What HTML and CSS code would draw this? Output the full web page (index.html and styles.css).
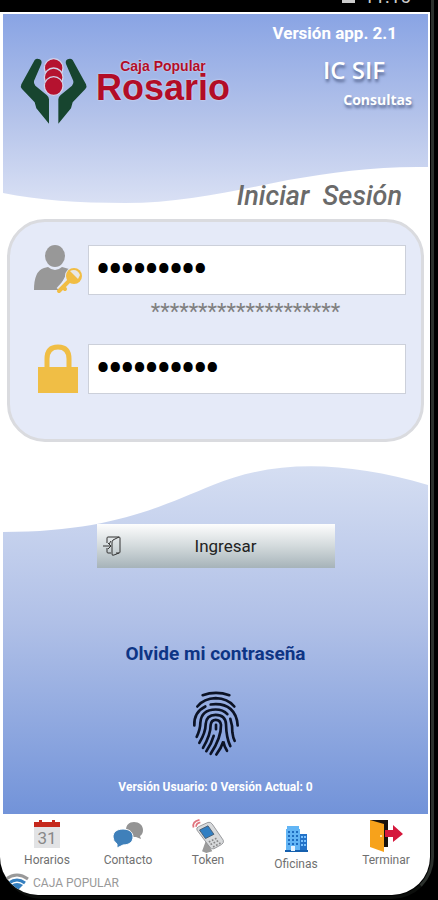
FILE: index.html
```html
<!DOCTYPE html>
<html lang="es">
<head>
    <meta charset="UTF-8">
    <meta name="viewport" content="width=device-width, initial-scale=1.0">
    <title>Caja Popular Rosario - Iniciar Sesión</title>
    <link rel="stylesheet" href="styles.css">
</head>
<body>
<div class="phone">

    <!-- Status bar -->
    <div class="status-bar">
        <span class="battery"></span>
        <span class="clock">11:16</span>
    </div>

    <div class="screen">

        <!-- Header -->
        <header class="hero">
            <svg class="wave" viewBox="0 0 425 189" preserveAspectRatio="none" aria-hidden="true">
                <defs>
                    <linearGradient id="sky" x1="0" y1="0" x2="0" y2="1">
                        <stop offset="0" stop-color="#89a4e4"/>
                        <stop offset="0.55" stop-color="#b4c3ea"/>
                        <stop offset="1" stop-color="#d9e0f4"/>
                    </linearGradient>
                </defs>
                <path fill="url(#sky)" d="M0 0H425V153C375 152 330 158 285 166C230 177 180 189 122 189C75 189 35 186 0 179Z"/>
            </svg>
            <p class="app-version">Versión app. 2.1</p>
            <div class="brand-row">
                <div class="brand">
                    <svg class="logo" viewBox="60 180 204 200" aria-hidden="true">
                        <g fill="#17452f">
                            <path d="M104 187Q110 181 119 185Q127 189 124 199L102 250Q100 258 106 264L140 292Q147 298 147 305V378L109 332L104 314L66 274Q60 267 64 260Z"/>
                            <path d="M218 187Q212 181 203 185Q195 189 198 199L220 250Q222 258 216 264L182 292Q175 298 175 305V378L213 332L218 314L256 274Q262 267 258 260Z"/>
                        </g>
                        <g fill="#b5122f" stroke="#d3d3ea" stroke-width="4">
                            <circle cx="161" cy="211" r="28"/>
                            <circle cx="161" cy="239" r="28"/>
                            <circle cx="161" cy="265" r="28"/>
                        </g>
                    </svg>
                    <div class="brand-name">
                        <span class="brand-small">Caja Popular</span>
                        <span class="brand-big">Rosario</span>
                    </div>
                </div>
                <div class="product">
                    <span class="product-name">IC SIF</span>
                    <span class="product-sub">Consultas</span>
                </div>
            </div>
            <h1>Iniciar&nbsp; Sesión</h1>
        </header>

        <!-- Login form -->
        <form id="login" class="card">
            <div class="field">
                <label for="user" aria-label="Usuario">
                    <svg width="50" height="50" viewBox="0 0 50 50" aria-hidden="true">
                        <ellipse cx="22" cy="11" rx="10" ry="11" fill="#989898"/>
                        <path fill="#989898" d="M1 45Q1 26 11 23L15 22Q22 28 29 22L36 24L25 45Z"/>
                        <path d="M27 46L36 36" stroke="#e5eaf8" stroke-width="9" fill="none"/>
                        <circle cx="41" cy="31" r="9" fill="#e5eaf8"/>
                        <path d="M26 46L36 36M30 42L32 44" stroke="#f1bd43" stroke-width="4" stroke-linecap="round" fill="none"/>
                        <circle cx="41" cy="31" r="8" fill="#f1bd43"/>
                        <path fill="#e8e7e4" d="M37 26Q44 23 47 30L45 34Z"/>
                    </svg>
                </label>
                <input type="password" id="user" value="123456789">
            </div>
            <p class="hint">********************</p>
            <div class="field">
                <label for="pass" aria-label="Contraseña">
                    <svg width="50" height="50" viewBox="0 0 50 50" aria-hidden="true">
                        <path d="M14 26V15Q14 3 25 3Q36 3 36 15V26" fill="none" stroke="#f0be45" stroke-width="5"/>
                        <rect x="5" y="23" width="40" height="26" fill="#f0be45"/>
                    </svg>
                </label>
                <input type="password" id="pass" value="1234567890">
            </div>
        </form>

        <!-- Access -->
        <main class="access">
            <svg class="wave" viewBox="0 0 425 348" preserveAspectRatio="none" aria-hidden="true">
                <defs>
                    <linearGradient id="sea" x1="0" y1="0" x2="0" y2="1">
                        <stop offset="0" stop-color="#d5def2"/>
                        <stop offset="0.45" stop-color="#b0c0e7"/>
                        <stop offset="1" stop-color="#7293d9"/>
                    </linearGradient>
                </defs>
                <path fill="url(#sea)" d="M0 66C110 66 160 39 210 19C270 -6 340 -6 425 19V348H0Z"/>
            </svg>
            <button class="enter" type="submit" form="login">
                <svg width="20" height="22" viewBox="0 0 20 22" fill="none" stroke="#333" stroke-width="1" aria-hidden="true">
                    <path d="M5 8V3Q5 2 6 2H17Q18 2 18 3V17Q18 18 17 18H14M5 13V17Q5 18 6 18H9"/>
                    <path d="M17 2L11 5Q10 6 10 8V19Q10 21 12 20L17 18"/>
                    <path d="M1 11H9M6 8L9 11L6 14M9 6L7 9"/>
                </svg>
                <span>Ingresar</span>
            </button>
            <a class="forgot" href="#">Olvide mi contraseña</a>
            <button class="finger" type="button" aria-label="Huella">
                <svg width="48" height="67" viewBox="315 182 144 200" fill="none" stroke="#0c1326" stroke-width="8" stroke-linecap="round" aria-hidden="true">
                    <path d="M347 197Q387 183 427 197"/>
                    <path d="M331 231Q351 207 386 206Q422 207 442 231"/>
                    <path d="M322 288Q320 248 355 231M371 225C425 218 450 248 452 288"/>
                    <path d="M329 322Q340 300 340 280C342 252 360 240 386 240Q408 240 421 254M430 268Q437 290 436 308Q438 325 443 334"/>
                    <path d="M337 340C352 315 356 298 356 284C357 265 368 256 386 256C406 256 416 266 417 284Q418 325 430 350"/>
                    <path d="M348 355C366 325 371 305 371 286Q373 271 386 271Q400 271 402 286Q403 325 371 373"/>
                    <path d="M387 286V299M380 319Q373 344 358 365"/>
                    <path d="M388 375Q403 355 409 336Q412 352 420 364"/>
                </svg>
            </button>
            <p class="versions">Versión Usuario: 0 Versión Actual: 0</p>
        </main>

        <!-- Bottom menu -->
        <nav class="menu">
            <a href="#">
                <svg width="28" height="30" viewBox="0 0 28 30" aria-hidden="true">
                    <rect x="1" y="7" width="26" height="22" fill="#e2e3e5"/>
                    <path fill="#c5281c" d="M1 3H6V1H9V3H19V1H22V3H27V8H1Z"/>
                    <text x="14" y="25" class="day">31</text>
                </svg>
                Horarios
            </a>
            <a href="#">
                <svg width="30" height="30" viewBox="0 0 30 30" aria-hidden="true">
                    <path fill="#949494" d="M21 3C26 3 30 6 30 11Q30 15 27 17L28 20L23 18C17 18 13 16 13 11C13 6 16 3 21 3Z"/>
                    <path fill="#3f80ba" stroke="#fff" d="M10 10C16 10 20 13 20 18C20 23 16 26 10 26L4 29L4 25Q0 22 0 18C0 13 4 10 10 10Z"/>
                </svg>
                Contacto
            </a>
            <a href="#">
                <svg class="token" width="38" height="40" viewBox="0 0 38 40" aria-hidden="true">
                    <path fill="none" stroke="#e0727c" stroke-width="2" d="M2 10Q0 3 9 1M5 9Q5 5 10 4"/>
                    <path fill="#9b9b9b" d="M17 24L25 24L22 34L24 38L17 40L12 38Z"/>
                    <path fill="#d7d9db" stroke="#8b8d90" d="M6 13Q5 10 8 9L19 4Q22 3 24 6L37 25Q38 28 35 30L26 35Q23 36 21 33Z"/>
                    <path fill="#317fc3" stroke="#44566a" d="M9 13L19 8L26 18L16 23Z"/>
                    <path stroke="#888" stroke-width="2" stroke-dasharray="2 2" d="M20 27L30 22M22 30L32 25M25 33L34 28"/>
                </svg>
                Token
            </a>
            <a href="#" class="low">
                <svg width="24" height="28" viewBox="0 0 24 28" aria-hidden="true">
                    <path fill="#62b5f5" d="M3 1H15V4H16V26H2V4H3Z"/>
                    <path fill="#2372c8" d="M16 9H23V26H16Z"/>
                    <path fill="#1660ae" d="M1 25H24V27H1Z"/>
                    <path stroke="#1e6dc0" stroke-width="2" stroke-dasharray="2 2" d="M4 7H15M4 11H15M4 15H15M4 19H15"/>
                    <path stroke="#7cc3ff" stroke-width="2" stroke-dasharray="2 1" d="M17 12H22M17 16H22M17 20H22"/>
                    <rect x="7" y="21" width="4" height="5" fill="#e5f4ff"/>
                </svg>
                Oficinas
            </a>
            <a href="#">
                <svg width="36" height="34" viewBox="0 0 36 34" aria-hidden="true">
                    <rect x="2" y="1" width="18" height="27" fill="#17120d"/>
                    <path fill="#f7a21b" d="M2 1L16 5V33L2 28Z"/>
                    <circle cx="13" cy="17" r="1" fill="#fff3c8"/>
                    <path fill="#d5183c" d="M17 11H25V6L35 15L25 23V18H17Z"/>
                </svg>
                Terminar
            </a>
        </nav>

        <footer class="network">
            <svg width="28" height="20" viewBox="0 0 28 20" fill="none" aria-hidden="true">
                <path stroke="#999" stroke-width="3" d="M3 6Q14 -2 25 6"/>
                <path stroke="#357fbf" stroke-width="3" d="M6 10Q14 4 22 10"/>
                <path fill="#357fbf" d="M8 12Q14 8 20 12L14 18Z"/>
            </svg>
            CAJA POPULAR
        </footer>
    </div>
</div>
</body>
</html>
```
FILE: styles.css
```css
* {
    box-sizing: border-box;
}

body {
    margin: 0;
    background-color: #000;
    font-family: Roboto, "Liberation Sans", sans-serif;
    color: #666;
}

p, h1 {
    margin: 0;
}

/* Phone frame */
.phone {
    margin-right: 4px;
    padding: 0 1px 1px 0;
    border-right: 3px solid #2c312d;
    border-bottom: 3px solid #0c0e0c;
    border-radius: 0 0 42px 42px;
}

.status-bar {
    display: flex;
    justify-content: flex-end;
    gap: 9px;
    height: 12px;
    padding-right: 19px;
    overflow: hidden;
    background-color: #000;
}

.battery {
    width: 13px;
    height: 3px;
    background-color: #ccc;
}

.clock {
    height: 20px;
    margin-top: -13px;
    font-size: 19px;
    line-height: 20px;
    color: #ccc;
}

.screen {
    overflow: hidden;
    padding-top: 2px;
    background-color: #fff;
    border-radius: 0 0 38px 38px;
}

/* Curved backgrounds */
.wave {
    position: absolute;
    top: 0;
    left: 0;
    width: 100%;
    z-index: -1;
}

/* Header */
.hero {
    position: relative;
    z-index: 0;
    margin: 0 2px 0 3px;
    padding-top: 8px;
}

.hero .wave {
    height: 189px;
}

.app-version {
    padding-right: 31px;
    font-size: 17px;
    font-weight: 700;
    line-height: 22px;
    text-align: right;
    color: #fff;
}

.brand-row {
    display: flex;
    justify-content: space-between;
    height: 138px;
    padding: 12px 16px 0 17px;
}

.brand {
    display: flex;
    gap: 8px;
}

.logo {
    width: 68px;
    height: 70px;
}

.brand-name {
    display: flex;
    flex-direction: column;
    align-items: center;
    padding-top: 4px;
    font-family: "Liberation Sans", Arial, sans-serif;
    font-weight: 700;
    color: #b20d27;
    text-shadow: 0 0 2px #e8e8f8;
}

.brand-small {
    font-size: 14px;
    line-height: 12px;
}

.brand-big {
    font-size: 36px;
    line-height: 32px;
}

.product {
    display: flex;
    flex-direction: column;
    width: 89px;
    color: #fff;
    text-shadow: 1px 3px 3px #5a6a94;
}

.product-name {
    font-family: "Open Sans", sans-serif;
    font-size: 24px;
    font-weight: 600;
    line-height: 28px;
}

.product-sub {
    align-self: flex-end;
    font-family: "Open Sans", sans-serif;
    font-size: 14px;
    font-weight: 700;
    line-height: 32px;
}

.hero h1 {
    padding-right: 26px;
    font-size: 27px;
    font-style: italic;
    font-weight: 500;
    line-height: 28px;
    text-align: right;
    color: #6a6a6a;
}

/* Login form */
.card {
    margin: 9px 6px 0 7px;
    padding: 23px 15px 45px 23px;
    background-color: #e5eaf8;
    border: 3px solid #dadbdf;
    border-radius: 38px;
}

.field {
    display: flex;
    gap: 5px;
}

.field label,
.field svg {
    display: block;
    flex: none;
}

.field input {
    flex: 1;
    min-width: 0;
    height: 50px;
    padding: 0 8px;
    font-family: Roboto, sans-serif;
    font-size: 36px;
    color: #000;
    -webkit-text-stroke: 2px #000;
    background-color: #fff;
    border: 1px solid #ccd0da;
    border-radius: 0;
    outline: none;
}

.hint {
    height: 49px;
    padding: 4px 0 0 52px;
    font-size: 22px;
    line-height: 26px;
    text-align: center;
    color: #808080;
}

/* Access */
.access {
    position: relative;
    z-index: 0;
    display: flex;
    flex-direction: column;
    align-items: center;
    margin: 24px 2px 0 3px;
    padding: 58px 0 19px;
}

.access .wave {
    height: 100%;
}

.enter {
    display: flex;
    align-items: center;
    width: 56%;
    height: 44px;
    padding: 0 5px;
    font-family: inherit;
    font-size: 17px;
    color: #222;
    background: linear-gradient(#fdfdfd, #d3dadc 50%, #a6b3b9);
    border: 0;
}

.enter span {
    flex: 1;
}

.forgot {
    margin-top: 74px;
    font-size: 19px;
    font-weight: 700;
    line-height: 24px;
    color: #0e3585;
    text-decoration: none;
}

.finger {
    margin-top: 24px;
    padding: 0;
    background: none;
    border: 0;
}

.finger svg {
    display: block;
}

.versions {
    margin-top: 22px;
    font-size: 12px;
    font-weight: 700;
    line-height: 16px;
    color: #fff;
}

/* Bottom menu */
.menu {
    display: grid;
    grid-template-columns: 41fr 40fr 40fr 48fr 42fr;
    padding: 5px 2px 0 6px;
}

.menu a {
    display: flex;
    flex-direction: column;
    align-items: center;
    justify-content: flex-start;
    font-size: 12px;
    line-height: 14px;
    color: #707070;
    text-decoration: none;
}

.menu svg {
    flex: none;
    margin-bottom: 4px;
}

.menu a:last-child svg,
.menu .token {
    margin-bottom: 0;
}

.menu .token {
    height: 34px;
}

.menu .low {
    padding-top: 6px;
}

.menu .low svg {
    margin-bottom: 4px;
}

.day {
    font-size: 17px;
    text-anchor: middle;
    fill: #888;
}

/* Network */
.network {
    display: flex;
    align-items: center;
    gap: 2px;
    height: 24px;
    padding-left: 3px;
    font-size: 12px;
    color: #999;
}
```
